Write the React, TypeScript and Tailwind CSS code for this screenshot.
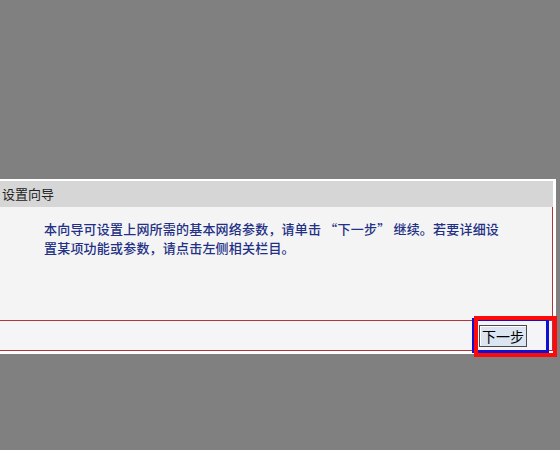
export default function App() {
  return (
    <div
      className="relative h-[450px] w-[560px] overflow-hidden bg-[#808080] pt-[179px]"
      style={{ fontFamily: '"Noto Sans CJK SC", "Liberation Sans", sans-serif' }}
    >
      {/* wizard panel */}
      <div className="w-[556px] bg-white pt-[2px] pr-[3px] pb-[3px]">
        <div className="flex h-[26px] items-center bg-[#d6d6d6] pl-[2px] text-[13px] text-[#222]">
          设置向导
        </div>
        <div className="border-r border-[#b8323a] bg-[#f4f4f4]">
          <div className="h-[113px] pl-[44px] pt-[12px] text-[13px] font-medium leading-[19px] tracking-[0.2px] text-[#223085]">
            <div>本向导可设置上网所需的基本网络参数，请单击 “下一步” 继续。若要详细设</div>
            <div>置某项功能或参数，请点击左侧相关栏目。</div>
          </div>
          <div className="flex h-[31px] items-center justify-end border-y border-[#b8323a] bg-[#f5f5f7] pr-[25px]">
            <button className="h-[22px] w-[48px] border border-[#4a4a4a] bg-[#dce6f2] text-[14px] leading-none text-black shadow-[inset_1px_1px_0_#fff]">
              下一步
            </button>
          </div>
        </div>
      </div>

      {/* annotation boxes over the button */}
      <div className="absolute left-[472px] top-[318px] h-[35px] w-[77px] border-[3px] border-[#1010d0]" />
      <div className="absolute left-[474px] top-[316px] h-[41px] w-[83px] border-4 border-[#ff0a0a]" />
    </div>
  );
}
